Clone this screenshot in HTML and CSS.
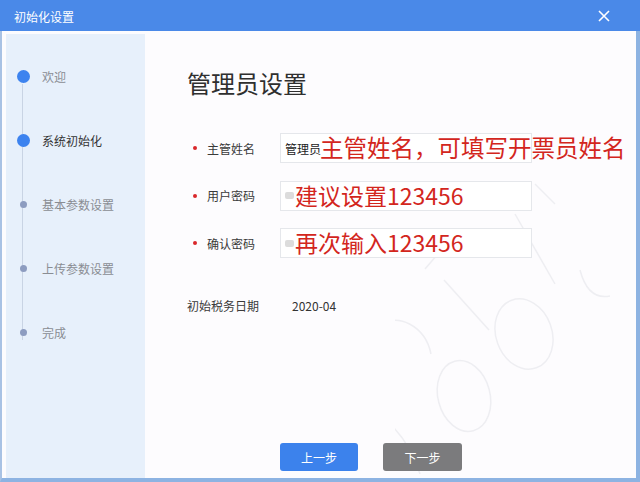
FILE: index.html
```html
<!DOCTYPE html>
<html lang="zh-CN">
<head>
    <meta charset="UTF-8">
    <meta name="viewport" content="width=device-width, initial-scale=1.0">
    <title>初始化设置</title>
    <link rel="stylesheet" href="styles.css">
</head>
<body>
    <div class="window">
        <header class="titlebar">
            <span class="title">初始化设置</span>
            <svg class="close" width="12" height="12" viewBox="0 0 12 12">
                <path d="M1 1 L11 11 M11 1 L1 11" stroke="#ffffff" stroke-width="1.6" fill="none"/>
            </svg>
        </header>
        <div class="frame">
            <aside class="sidebar">
                <ul class="steps">
                    <li class="step done"><span class="dot-box"><span class="dot"></span></span>欢迎</li>
                    <li class="step current"><span class="dot-box"><span class="dot"></span></span>系统初始化</li>
                    <li class="step"><span class="dot-box"><span class="dot"></span></span>基本参数设置</li>
                    <li class="step"><span class="dot-box"><span class="dot"></span></span>上传参数设置</li>
                    <li class="step"><span class="dot-box"><span class="dot"></span></span>完成</li>
                </ul>
            </aside>
            <main class="panel">
                <svg class="watermark" width="240" height="300" viewBox="0 0 240 300">
                    <g fill="none" stroke="#eeeef2" stroke-width="1.5">
                        <path d="M140 10 L160 30"/>
                        <path d="M120 40 L160 110"/>
                        <path d="M60 60 L30 95"/>
                        <path d="M49 106 L94 156"/>
                        <ellipse cx="129" cy="160" rx="28" ry="36" transform="rotate(-20 129 160)"/>
                        <ellipse cx="69" cy="222" rx="26" ry="36" transform="rotate(-15 69 222)"/>
                        <path d="M-10 150 C 0 140, 30 150, 36 180"/>
                        <path d="M185 96 C 190 115, 200 125, 215 122"/>
                        <path d="M-20 240 C 0 250, 15 270, 25 300"/>
                    </g>
                </svg>
                <h1 class="heading">管理员设置</h1>
                <div class="form">
                    <div class="row">
                        <label class="label required">主管姓名</label>
                        <div class="field">
                            <span class="value">管理员</span>
                            <span class="note note-wide">主管姓名，可填写开票员姓名</span>
                        </div>
                    </div>
                    <div class="row">
                        <label class="label required">用户密码</label>
                        <div class="field">
                            <span class="mask"></span>
                            <span class="note">建议设置123456</span>
                        </div>
                    </div>
                    <div class="row">
                        <label class="label required">确认密码</label>
                        <div class="field">
                            <span class="mask"></span>
                            <span class="note">再次输入123456</span>
                        </div>
                    </div>
                    <div class="row date-row">
                        <span class="label plain">初始税务日期</span>
                        <span class="date">2020-04</span>
                    </div>
                </div>
                <div class="actions">
                    <button class="btn btn-prev" type="button">上一步</button>
                    <button class="btn btn-next" type="button">下一步</button>
                </div>
            </main>
        </div>
    </div>
</body>
</html>
```

FILE: styles.css
```css
/* initial setup wizard window */
* {
    box-sizing: border-box;
}
body {
    margin: 0;
    padding: 0;
    width: 640px;
    height: 482px;
    overflow: hidden;
    font-family: "Noto Sans CJK SC", "Noto Sans", sans-serif;
    background-color: #ffffff;
}
.window {
    width: 640px;
    height: 482px;
    display: flex;
    flex-direction: column;
}
.titlebar {
    height: 31px;
    background-color: #4a89e8;
    display: flex;
    align-items: center;
    justify-content: space-between;
    padding: 2px 30px 0 14px;
    color: #ffffff;
}
.title {
    font-size: 12px;
}
.close {
    display: block;
    margin-top: -2px;
}
.frame {
    flex: 1;
    display: flex;
    background-color: #fdfcfe;
    border-left: 2px solid #a9c2e4;
    border-right: 4px solid #8db3e2;
    border-bottom: 4px solid #8db3e2;
    padding: 3px 0 0 4px;
}
.sidebar {
    width: 139px;
    background-color: #e7f0fb;
}
.steps {
    list-style: none;
    margin: 0;
    padding: 10px 0 0 0;
    position: relative;
}
.steps::before {
    content: "";
    position: absolute;
    left: 16px;
    top: 50px;
    height: 256px;
    border-left: 1px solid #c9d4e4;
}
.step {
    height: 64px;
    display: flex;
    align-items: center;
    font-size: 12px;
    color: #8a8d93;
    padding-left: 7px;
}
.dot-box {
    width: 20px;
    display: flex;
    justify-content: center;
    margin-right: 9px;
    position: relative;
}
.dot {
    width: 7px;
    height: 7px;
    border-radius: 50%;
    background-color: #8d9cc0;
}
.step.done .dot, .step.current .dot {
    width: 13px;
    height: 13px;
    background-color: #3d83ef;
}
.step.current {
    color: #333333;
}
.panel {
    flex: 1;
    display: flex;
    flex-direction: column;
    padding: 34px 0 0 42px;
    position: relative;
    overflow: hidden;
}
.watermark {
    position: absolute;
    left: 250px;
    top: 140px;
}
.heading {
    margin: 0;
    font-size: 24px;
    font-weight: normal;
    line-height: 30px;
    color: #2f2f2f;
    position: relative;
}
.form {
    margin-top: 35px;
    display: flex;
    flex-direction: column;
    gap: 17.5px;
    position: relative;
}
.row {
    display: flex;
    align-items: center;
    height: 30px;
}
.label {
    width: 93px;
    font-size: 12px;
    color: #3a3a3a;
    padding-left: 20px;
    position: relative;
}
.label.required::before {
    content: "";
    position: absolute;
    left: 6px;
    top: 50%;
    width: 4px;
    height: 4px;
    margin-top: -2px;
    border-radius: 50%;
    background-color: #d9272b;
}
.label.plain {
    padding-left: 0;
    width: 105px;
}
.field {
    width: 252px;
    height: 30px;
    border: 1px solid #e5e7eb;
    background-color: #ffffff;
    display: flex;
    align-items: center;
    padding-left: 4px;
    position: relative;
}
.value {
    font-size: 12px;
    color: #222222;
}
.mask {
    width: 9px;
    height: 7px;
    background-color: #dcdcdc;
    border-radius: 2px;
}
.note {
    position: absolute;
    left: 14px;
    top: 50%;
    transform: translateY(-54%);
    white-space: nowrap;
    font-size: 23px;
    color: #d3261d;
}
.note-wide {
    left: 39px;
    font-size: 23.5px;
}
.date-row {
    margin-top: 20px;
    height: 20px;
}
.date {
    font-size: 12px;
    color: #333333;
}
.actions {
    margin-top: auto;
    margin-bottom: 7px;
    margin-left: 93px;
    display: flex;
    gap: 25px;
    position: relative;
}
.btn {
    width: 78px;
    height: 28px;
    border: none;
    border-radius: 3px;
    color: #ffffff;
    font-family: inherit;
    font-size: 12px;
    cursor: pointer;
}
.btn-prev {
    background-color: #3c82ec;
}
.btn-next {
    width: 79px;
    background-color: #7b7b7d;
}
```
